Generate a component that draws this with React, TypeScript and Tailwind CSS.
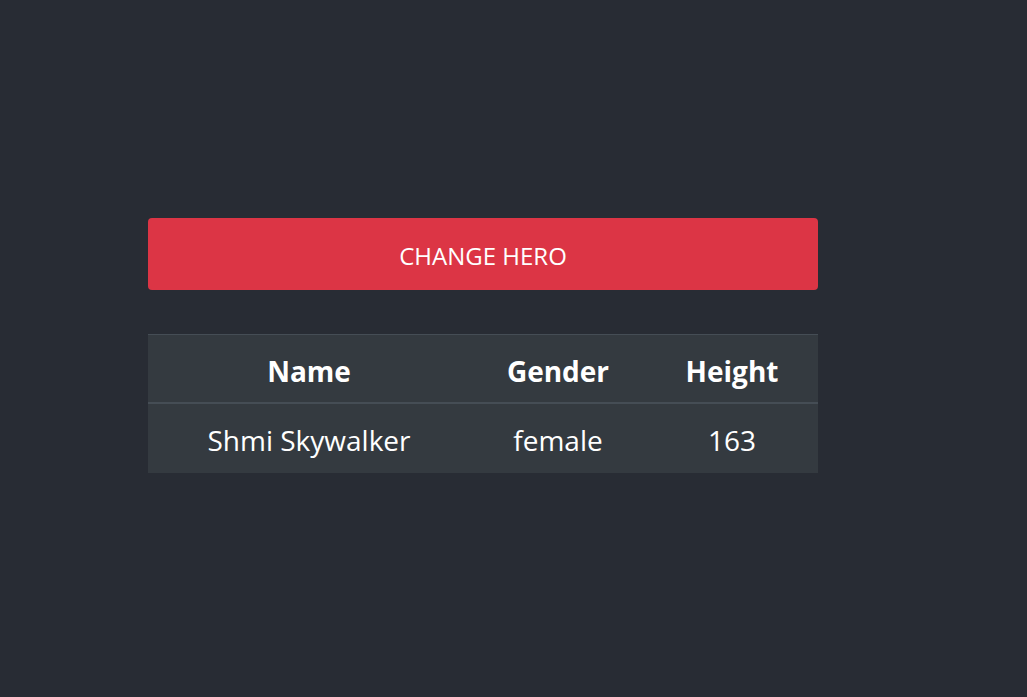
import React from 'react';

const App: React.FC = () => {
  return (
    <div className="min-h-[697px] bg-[#282c34] text-white" style={{ fontFamily: '"Open Sans", "Noto Sans", sans-serif' }}>
      <div className="w-[670px] ml-[148px] pt-[218px]">
        {/* Button */}
        <button className="w-full h-[72px] bg-[#dc3545] rounded-[4px] text-[24px] leading-none pt-[4px] text-white flex items-center justify-center">
          CHANGE HERO
        </button>

        {/* Table */}
        <div className="mt-[44px] bg-[#343a40] border-t border-[#454d55]">
          <div className="grid grid-cols-[322px_176px_172px] h-[69px] items-center pt-[4px] border-b-2 border-[#454d55] text-[28px] leading-none font-bold text-center">
            <div>Name</div>
            <div>Gender</div>
            <div>Height</div>
          </div>
          <div className="grid grid-cols-[322px_176px_172px] h-[69px] items-center pt-[3px] text-[28px] leading-none text-center">
            <div>Shmi Skywalker</div>
            <div>female</div>
            <div>163</div>
          </div>
        </div>
      </div>
    </div>
  );
};

export default App;
